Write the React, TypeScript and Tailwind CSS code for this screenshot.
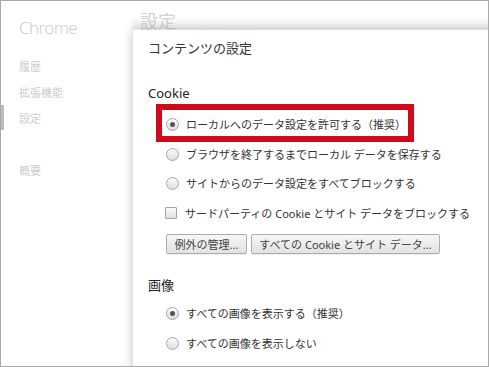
import React from "react";

function Radio({ checked }: { checked?: boolean }) {
  return (
    <span className="w-[13px] h-[13px] rounded-full border border-[#a4a4a4] bg-gradient-to-b from-[#fbfbfb] to-[#dedede] flex items-center justify-center shrink-0 shadow-[inset_0_1px_0_#fff]">
      {checked && <span className="w-[5px] h-[5px] rounded-full bg-[#555]" />}
    </span>
  );
}

function RadioRow({ label, checked }: { label: string; checked?: boolean }) {
  return (
    <div className="h-[29.5px] flex items-center pl-[18px] gap-[7px]">
      <Radio checked={checked} />
      <span className="text-[11px] text-[#333] leading-none">{label}</span>
    </div>
  );
}

function Btn({ children, w }: { children: React.ReactNode; w: string }) {
  return (
    <div
      className={`${w} h-[20px] rounded-[2px] border border-[#acacac] bg-gradient-to-b from-[#f7f7f7] to-[#e2e2e2] flex items-center justify-center text-[11px] text-[#444] leading-none shadow-[0_1px_0_rgba(0,0,0,0.06)]`}
    >
      {children}
    </div>
  );
}

export default function App() {
  return (
    <div className="w-[489px] h-[367px] border border-[#a9a9a9] relative overflow-hidden bg-white flex font-['Noto_Sans','Noto_Sans_CJK_JP',sans-serif]">
      {/* sidebar */}
      <aside className="w-[131px] shrink-0 relative flex flex-col pl-[18px] pt-[13px] text-[#cdcdcd]">
        <div className="text-[17px] font-light tracking-[-0.6px] leading-[28px] text-[#cfcfcf]">Chrome</div>
        <div className="mt-[11px] flex flex-col text-[11px] leading-none">
          <div className="h-[26px] flex items-center">履歴</div>
          <div className="h-[26px] flex items-center">拡張機能</div>
          <div className="h-[26px] flex items-center">設定</div>
          <div className="h-[26px]" />
          <div className="h-[26px] flex items-center">概要</div>
        </div>
        <div className="absolute left-0 top-[104px] w-[3px] h-[25px] bg-[#bdbdbd]" />
      </aside>

      {/* main page behind */}
      <main className="flex-1 flex flex-col">
        <div className="h-[28px] bg-gradient-to-b from-white via-white to-[#efefef] pl-[8px] pt-[10px] text-[18px] leading-[20px] text-[#d2d2d2]">
          設定
        </div>
      </main>

      {/* dialog */}
      <div className="absolute left-[132px] top-[29px] w-[420px] h-[400px] bg-white shadow-[0_0_10px_rgba(0,0,0,0.25)] flex flex-col pl-[15px] pt-[9px]">
        <div className="h-[18px] flex items-center text-[13px] text-[#333] leading-none">コンテンツの設定</div>
        <div className="mt-[27px] h-[18px] flex items-center text-[13px] text-[#222] leading-none">Cookie</div>
        <div className="mt-[8px] flex flex-col">
          <RadioRow label="ローカルへのデータ設定を許可する（推奨）" checked />
          <RadioRow label="ブラウザを終了するまでローカル データを保存する" />
          <RadioRow label="サイトからのデータ設定をすべてブロックする" />
          <div className="h-[29.5px] flex items-center pl-[17px] gap-[8px]">
            <span className="w-[12px] h-[12px] border border-[#a4a4a4] rounded-[1px] bg-gradient-to-b from-[#fbfbfb] to-[#e0e0e0] shrink-0" />
            <span className="text-[11px] text-[#333] leading-none">サードパーティの Cookie とサイト データをブロックする</span>
          </div>
        </div>
        <div className="mt-[6px] pl-[18px] flex gap-[4px]">
          <Btn w="w-[81px]">例外の管理...</Btn>
          <Btn w="w-[189px]">すべての Cookie とサイト データ...</Btn>
        </div>
        <div className="mt-[22px] h-[18px] flex items-center text-[13px] text-[#222] leading-none">画像</div>
        <div className="mt-[5px] flex flex-col">
          <RadioRow label="すべての画像を表示する（推奨）" checked />
          <RadioRow label="すべての画像を表示しない" />
        </div>

        {/* annotation box */}
        <div className="absolute left-[23px] top-[74px] w-[258px] h-[38px] border-[6px] border-[#d2091c]" />
      </div>
    </div>
  );
}
